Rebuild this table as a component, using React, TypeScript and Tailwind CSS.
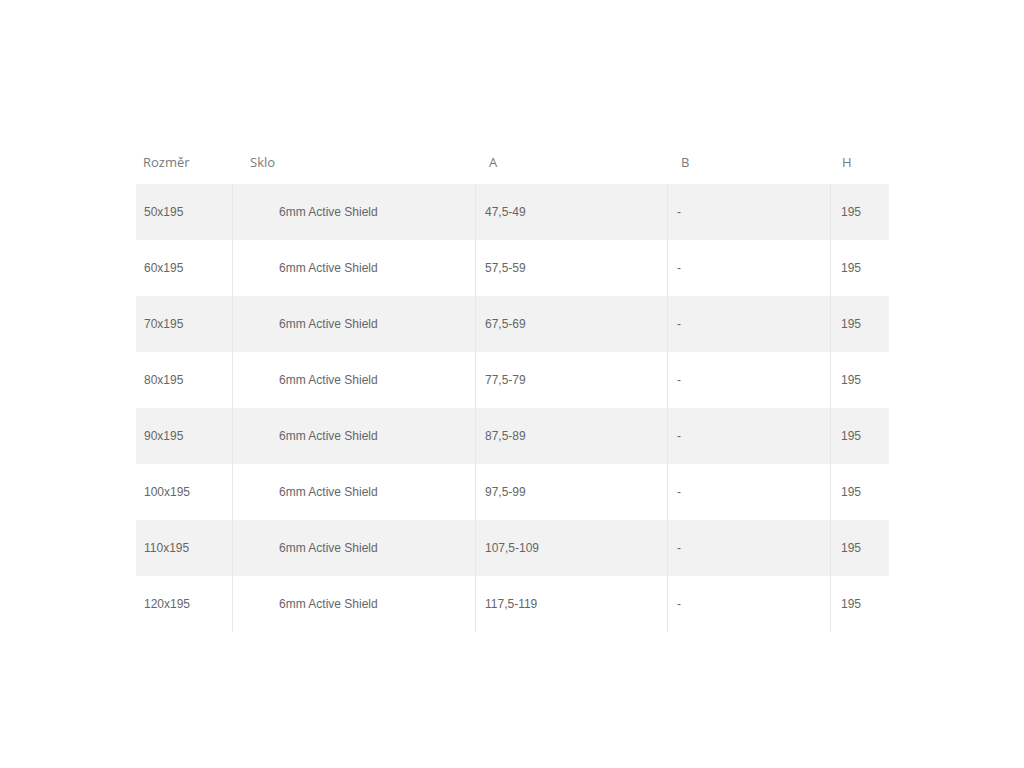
import React from "react";

const rows = [
  ["50x195", "47,5-49"],
  ["60x195", "57,5-59"],
  ["70x195", "67,5-69"],
  ["80x195", "77,5-79"],
  ["90x195", "87,5-89"],
  ["100x195", "97,5-99"],
  ["110x195", "107,5-109"],
  ["120x195", "117,5-119"],
];

export default function App() {
  return (
    <div className="w-[1024px] h-[768px] bg-white pt-[140px] pl-[136px]">
      <div className="w-[753px]">
        <div
          className="grid grid-cols-[96px_243px_192px_163px_59px] h-[44px] pt-[2px] items-center text-[13px] text-[#7a7a7a]"
          style={{ fontFamily: '"Open Sans", sans-serif' }}
        >
          <div className="pl-[7px]">Rozměr</div>
          <div className="pl-[18px]">Sklo</div>
          <div className="pl-[14px]">A</div>
          <div className="pl-[14px]">B</div>
          <div className="pl-[12px]">H</div>
        </div>
        {rows.map((r, i) => (
          <div
            key={r[0]}
            className={
              "grid grid-cols-[96px_243px_192px_163px_59px] h-[56px] items-stretch text-[12px] text-[#666] " +
              (i % 2 === 0 ? "bg-[#f2f2f2]" : "bg-white")
            }
            style={{ fontFamily: '"Liberation Sans", Arial, sans-serif' }}
          >
            <div className="flex items-center pl-[8px]">{r[0]}</div>
            <div className="flex items-center pl-[46px] border-l border-[#e6e6e6]">6mm Active Shield</div>
            <div className="flex items-center pl-[9px] border-l border-[#e6e6e6]">{r[1]}</div>
            <div className="flex items-center pl-[9px] border-l border-[#e6e6e6]">-</div>
            <div className="flex items-center pl-[10px] border-l border-[#e6e6e6]">195</div>
          </div>
        ))}
      </div>
    </div>
  );
}
